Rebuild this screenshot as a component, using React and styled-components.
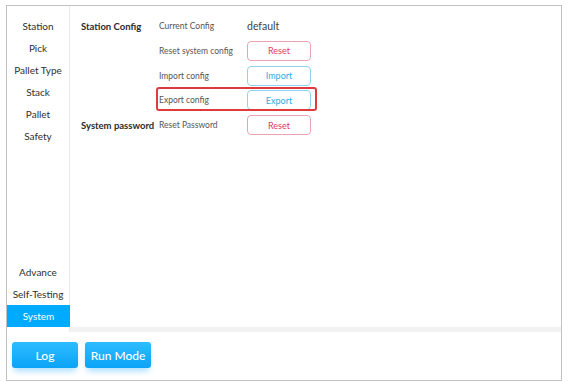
import React from "react";
import styled, { createGlobalStyle } from "styled-components";

const Global = createGlobalStyle`
  html, body { margin: 0; padding: 0; background: #fff; }
  body { font-family: Lato, "Noto Sans", sans-serif; color: #333; }
`;

const Page = styled.div`
  width: 575px;
  height: 389px;
  padding: 5px 0 0 6px;
  box-sizing: border-box;
`;

const Frame = styled.div`
  width: 556px;
  height: 376px;
  box-sizing: border-box;
  border: 1px solid #c2c2c2;
  display: flex;
  flex-direction: column;
`;

const Top = styled.div`
  display: flex;
  height: 326px;
`;

const Sidebar = styled.nav`
  width: 63px;
  box-sizing: border-box;
  border-right: 1px solid #ebebeb;
  padding: 9px 0 5px;
  display: flex;
  flex-direction: column;
`;

const NavGroup = styled.div`
  display: flex;
  flex-direction: column;
  margin-top: ${(p) => (p.$bottom ? "auto" : "0")};
`;

const NavItem = styled.div`
  height: 22px;
  line-height: 22px;
  text-align: center;
  font-size: 10px;
  white-space: nowrap;
  color: ${(p) => (p.$active ? "#fff" : "#2f2f2f")};
  background: ${(p) => (p.$active ? "#00aaff" : "transparent")};
  margin-right: ${(p) => (p.$active ? "-1px" : "0")};
`;

const Content = styled.main`
  flex: 1;
  position: relative;
  border-bottom: 5px solid #f2f2f2;
  padding: 10px 0 0 11px;
  display: grid;
  grid-template-columns: 78px 88px 64px;
  grid-auto-rows: 20px;
  row-gap: 4.75px;
  align-content: start;
  align-items: center;
`;

const Heading = styled.div`
  font-size: 9.5px;
  font-weight: 700;
  color: #2b2b2b;
  white-space: nowrap;
`;

const Label = styled.div`
  font-size: 8.5px;
  color: #555;
  white-space: nowrap;
`;

const Value = styled.div`
  font-size: 10.5px;
  color: #444;
`;

const ActionButton = styled.button`
  width: 64px;
  height: 20px;
  box-sizing: border-box;
  border-radius: 4px;
  background: #fff;
  font-family: inherit;
  font-size: 9px;
  padding: 0;
  border: 1px solid ${(p) => (p.$tone === "red" ? "#eba3b4" : "#92d3f2")};
  color: ${(p) => (p.$tone === "red" ? "#e23a60" : "#27aee6")};
`;

const Highlight = styled.div`
  position: absolute;
  left: 86px;
  top: 81px;
  width: 161px;
  height: 24px;
  box-sizing: border-box;
  border: 2px solid #df3b3f;
  border-radius: 3px;
  pointer-events: none;
`;

const Footer = styled.div`
  flex: 1;
  display: flex;
  gap: 7px;
  padding: 10px 0 0 5px;
`;

const BigButton = styled.button`
  width: 66px;
  height: 26px;
  border: none;
  border-radius: 3px;
  background: linear-gradient(#2fbcff, #0aa3f7);
  color: #fff;
  font-family: inherit;
  font-size: 12px;
  font-weight: 500;
  padding: 0;
  box-shadow: 0 5px 6px -2px rgba(0, 160, 255, 0.35);
`;

const topItems = ["Station", "Pick", "Pallet Type", "Stack", "Pallet", "Safety"];
const bottomItems = ["Advance", "Self-Testing", "System"];

export default function App() {
  return (
    <>
      <Global />
      <Page>
        <Frame>
          <Top>
            <Sidebar>
              <NavGroup>
                {topItems.map((t) => (
                  <NavItem key={t}>{t}</NavItem>
                ))}
              </NavGroup>
              <NavGroup $bottom>
                {bottomItems.map((t) => (
                  <NavItem key={t} $active={t === "System"}>
                    {t}
                  </NavItem>
                ))}
              </NavGroup>
            </Sidebar>
            <Content>
              <Heading>Station Config</Heading>
              <Label>Current Config</Label>
              <Value>default</Value>

              <span />
              <Label>Reset system config</Label>
              <ActionButton $tone="red">Reset</ActionButton>

              <span />
              <Label>Import config</Label>
              <ActionButton $tone="blue">Import</ActionButton>

              <span />
              <Label>Export config</Label>
              <ActionButton $tone="blue">Export</ActionButton>

              <Heading>System password</Heading>
              <Label>Reset Password</Label>
              <ActionButton $tone="red">Reset</ActionButton>

              <Highlight />
            </Content>
          </Top>
          <Footer>
            <BigButton>Log</BigButton>
            <BigButton>Run Mode</BigButton>
          </Footer>
        </Frame>
      </Page>
    </>
  );
}
